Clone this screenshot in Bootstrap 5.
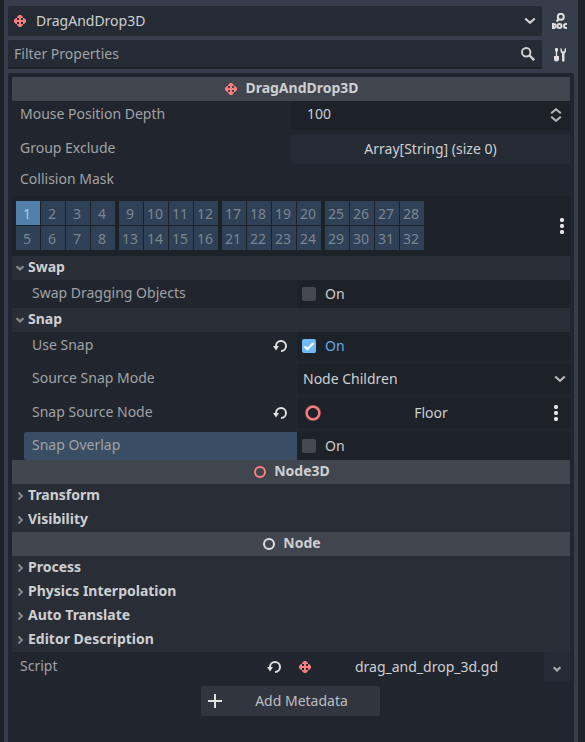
<!DOCTYPE html>
<html lang="en" data-bs-theme="dark">
<head>
<meta charset="utf-8">
<meta name="viewport" content="width=device-width, initial-scale=1">
<title>Inspector</title>
<link href="https://cdn.jsdelivr.net/npm/bootstrap@5.3.0/dist/css/bootstrap.min.css" rel="stylesheet">
<style>
:root{--base:#21262e;--dark:#1d2229;--btn:#252b34;--frame:#363d4a;--sub:#292d35;--cat:#41454d;--txt:#cdcfd2;--dim:#a0a2a5}
body{background:var(--dark);font-family:"Noto Sans",sans-serif;font-size:14px;line-height:20px;color:var(--txt);height:742px;overflow:hidden;padding:0 7px 0 4px}
svg{display:block;flex:none}
.frame{background:var(--frame);height:742px;padding:6px 4px 0}
.pick{background:var(--btn);height:30px;border-radius:2px;padding:0 6px}
.pick span{padding-left:10px}
.filter{background:var(--btn);height:29px;border-bottom:2px solid var(--dark);border-radius:2px 2px 0 0;padding:0 7px 0 6px;color:var(--dim)}
.tool{width:32px;padding-left:4px}
.inspector{background:var(--base);height:669px;margin-top:4px;padding:4px 4px 0;border-radius:2px 2px 0 0}
.cat{background:var(--cat);height:24px;font-weight:700;padding:0 0 2px 2px;border-radius:1px}
.cat svg{margin:2px 8px 0 0}
.fold{background:var(--sub);height:24px;font-weight:700;padding:0 0 2px 4px}
.fold svg{margin:2px 4px 0 0;width:8px;color:#85888d}
.prop{height:28px}
.first{height:29px}
.tall{height:30px}
.name{width:273px;padding:0 10px 2px 8px;margin-left:12px;color:var(--dim)}
.name svg{margin-top:2px}
.name.root{width:279px;margin-left:0}
.first .name{padding-bottom:4px}
.caption{height:32px}
.name.picked{background:#394e64;border-radius:2px 0 0 2px}
.val{background:var(--dark);border-radius:2px;min-width:0}
.val.flat{background:var(--btn)}
.val.none{background:none}
.choice{padding:0 4px 0 6px}
.choice svg{color:#b5b7ba}
.nodepick{padding:0 12px 0 8px}
.nodepick span{padding:0 16px 0 3px}
.more{width:26px;color:#a3a5a9}
.scriptname{padding-right:2px}
.spin{margin:2px 8px 0 0}
.tick{width:14px;height:14px;background:#45484f;border-radius:2px;margin:0 9px 0 5px}
.tick.on{background:#70bafa}
.blue{color:#64abe8}
.salmon{color:#fc7f7f}
.white{color:#e0e0e0}
.mask{background:var(--dark);height:60px;padding:5px 6px 0 4px;border-radius:2px 2px 0 0}
.mask>svg{margin-top:17px}
.bits{display:grid;grid-template-columns:repeat(4,24px);grid-auto-rows:24px;gap:1px;margin-right:4px}
.bits span{background:#2e4156;color:#7c858f;text-align:center;line-height:25px;padding-right:2px}
.bits .set{background:#5180aa;color:#b5c8da}
.meta{width:179px;height:30px;background:#31353d;border-radius:2px;margin-left:189px;padding:0 7px;color:#bbbec2}
.meta span{padding-left:8px}
</style>
<script src="https://cdn.jsdelivr.net/npm/bootstrap@5.3.0/dist/js/bootstrap.bundle.min.js"></script>
</head>
<body>
<svg width="0" height="0" class="position-absolute">
  <symbol id="move" viewBox="0 0 12 12"><path fill="#fc7f7f" d="M5 0h2l2 2v1H7v2h2V3h1l2 2v2l-2 2H9V7H7v2h2v1l-2 2H5l-2-2V9h2V7H3v2H2L0 7V5l2-2h1v2h2V3H3V2z"/></symbol>
  <symbol id="down" viewBox="0 0 12 8"><path fill="none" stroke="currentColor" stroke-width="2.200" d="M1.200 1.500 6 5.800l4.800-4.300"/></symbol>
  <symbol id="chev" viewBox="0 0 8 8"><path fill="none" stroke="currentColor" stroke-width="2.200" d="M.6 2.200 4 5.400l3.400-3.200"/></symbol>
  <symbol id="side" viewBox="0 0 8 8"><path fill="none" stroke="currentColor" stroke-width="2" d="M2.400.6 6 4 2.400 7.400"/></symbol>
  <symbol id="undo" viewBox="0 0 14 14"><path fill="none" stroke="#e0e0e0" stroke-width="2" d="M3 8V7a5 5 0 1 1 5 5"/><path fill="#e0e0e0" d="M0 7h6l-3 4.500z"/></symbol>
  <symbol id="ring" viewBox="0 0 12 12"><circle cx="6" cy="6" r="5" fill="none" stroke="currentColor" stroke-width="2"/></symbol>
  <symbol id="dots" viewBox="0 0 4 16"><path fill="#e0e0e0" d="M1 0h2l1 1v2L3 4H1L0 3V1zM1 6h2l1 1v2l-1 1H1L0 9V7zM1 12h2l1 1v2l-1 1H1l-1-1v-2z"/></symbol>
</svg>

<main class="frame">
  <header class="d-flex mb-1">
    <div class="pick d-flex align-items-center flex-grow-1"><svg width="12" height="12"><use href="#move"/></svg><span class="flex-grow-1">DragAndDrop3D</span><svg width="12" height="8"><use href="#down"/></svg></div>
    <div class="tool d-flex align-items-center justify-content-center">
      <svg width="16" height="16" viewBox="0 0 16 16"><g fill="none" stroke="#e0e0e0"><circle cx="8.800" cy="3.800" r="3" stroke-width="2"/><path stroke-width="2.200" d="M7 6 4.500 8.500"/><path stroke-width="2" d="M1 10v6M1 11h.7a2 2 0 0 1 0 4H1zM15 11h-1a2 2 0 0 0 0 4h1"/><circle cx="7.500" cy="13" r="2" stroke-width="2"/></g></svg>
    </div>
  </header>
  <div class="d-flex">
    <div class="filter d-flex align-items-center flex-grow-1"><span class="flex-grow-1">Filter Properties</span><svg width="14" height="14" viewBox="0 0 14 14"><g fill="none" stroke="#cdcfd2"><circle cx="5.200" cy="5.200" r="4.200" stroke-width="2"/><path stroke-width="2.400" d="m8.200 8.200 5 5"/></g></svg></div>
    <div class="tool d-flex align-items-center justify-content-center">
      <svg width="14" height="16" viewBox="0 0 14 16"><g fill="#e0e0e0"><path d="M2 1.500 3 1h1l1 .5v2L4.200 5v4H6v3.500a2.500 2 0 0 1-5 0V9h1.800V5L2 3.500z"/><path d="M7.500 1v3A3 3 0 0 0 9 6.500V14q1 1.500 2.500 0V6.500A3 3 0 0 0 13 4V1l-1.500 1v2.200H9V2z"/></g></svg>
    </div>
  </div>

  <section class="inspector">
    <div class="cat d-flex align-items-center justify-content-center"><svg width="12" height="12"><use href="#move"/></svg>DragAndDrop3D</div>
    <div class="prop first d-flex mb-1"><div class="name root d-flex align-items-center">Mouse Position Depth</div>
      <div class="val d-flex align-items-center flex-grow-1 ps-3 pb-1"><span class="flex-grow-1">100</span><svg class="spin" width="12" height="14" viewBox="0 0 12 14"><path fill="none" stroke="#b5b7ba" stroke-width="2" d="M1.200 5.200 6 1.200l4.800 4M1.200 8.800l4.800 4 4.800-4"/></svg></div></div>
    <div class="prop tall d-flex"><div class="name root d-flex align-items-center">Group Exclude</div><div class="val flat d-flex align-items-center justify-content-center flex-grow-1">Array[String] (size 0)</div></div>
    <div class="name root caption d-flex align-items-center">Collision Mask</div>
    <div class="mask d-flex align-items-start">
      <div class="bits"><span class="set">1</span><span>2</span><span>3</span><span>4</span><span>5</span><span>6</span><span>7</span><span>8</span></div>
      <div class="bits"><span>9</span><span>10</span><span>11</span><span>12</span><span>13</span><span>14</span><span>15</span><span>16</span></div>
      <div class="bits"><span>17</span><span>18</span><span>19</span><span>20</span><span>21</span><span>22</span><span>23</span><span>24</span></div>
      <div class="bits"><span>25</span><span>26</span><span>27</span><span>28</span><span>29</span><span>30</span><span>31</span><span>32</span></div>
      <svg class="ms-auto" width="4" height="16"><use href="#dots"/></svg>
    </div>

    <div class="fold d-flex align-items-center"><svg height="8"><use href="#chev"/></svg>Swap</div>
    <div class="prop d-flex"><div class="name d-flex align-items-center">Swap Dragging Objects</div><div class="val d-flex align-items-center flex-grow-1"><i class="tick"></i>On</div></div>
    <div class="fold d-flex align-items-center"><svg height="8"><use href="#chev"/></svg>Snap</div>
    <div class="prop d-flex mb-1"><div class="name d-flex align-items-center justify-content-between">Use Snap<svg width="14" height="14"><use href="#undo"/></svg></div><div class="val d-flex align-items-center flex-grow-1 blue"><i class="tick on"><svg width="14" height="14" viewBox="0 0 14 14"><path fill="none" stroke="#fff" stroke-width="2.200" d="m2.500 7.500 3 2.500 6-6"/></svg></i>On</div></div>
    <div class="prop tall d-flex mb-1"><div class="name d-flex align-items-center">Source Snap Mode</div><div class="val choice d-flex align-items-center justify-content-between flex-grow-1">Node Children<svg width="12" height="8"><use href="#down"/></svg></div></div>
    <div class="prop tall d-flex mb-1"><div class="name d-flex align-items-center justify-content-between">Snap Source Node<svg width="14" height="14"><use href="#undo"/></svg></div><div class="val nodepick d-flex align-items-center flex-grow-1"><svg class="salmon" width="16" height="16" viewBox="0 0 16 16"><circle cx="8" cy="8" r="6.500" fill="none" stroke="#8d4f54" stroke-width="3"/><circle cx="8" cy="8" r="6.300" fill="none" stroke="currentColor" stroke-width="2"/></svg><span class="flex-grow-1 text-center">Floor</span><svg width="4" height="16"><use href="#dots"/></svg></div></div>
    <div class="prop d-flex"><div class="name picked d-flex align-items-center">Snap Overlap</div><div class="val d-flex align-items-center flex-grow-1"><i class="tick"></i>On</div></div>

    <div class="cat d-flex align-items-center justify-content-center"><svg class="salmon" width="12" height="12"><use href="#ring"/></svg>Node3D</div>
    <div class="fold d-flex align-items-center"><svg height="8"><use href="#side"/></svg>Transform</div>
    <div class="fold d-flex align-items-center"><svg height="8"><use href="#side"/></svg>Visibility</div>
    <div class="cat d-flex align-items-center justify-content-center"><svg class="white" width="12" height="12"><use href="#ring"/></svg>Node</div>
    <div class="fold d-flex align-items-center"><svg height="8"><use href="#side"/></svg>Process</div>
    <div class="fold d-flex align-items-center"><svg height="8"><use href="#side"/></svg>Physics Interpolation</div>
    <div class="fold d-flex align-items-center"><svg height="8"><use href="#side"/></svg>Auto Translate</div>
    <div class="fold d-flex align-items-center"><svg height="8"><use href="#side"/></svg>Editor Description</div>
    <div class="prop tall d-flex mb-1"><div class="name root d-flex align-items-center justify-content-between">Script<svg width="14" height="14"><use href="#undo"/></svg></div>
      <div class="val none d-flex align-items-center flex-grow-1 ps-2"><svg width="12" height="12"><use href="#move"/></svg><span class="scriptname flex-grow-1 text-center">drag_and_drop_3d.gd</span></div>
      <div class="val flat more d-flex align-items-center justify-content-center"><svg class="mt-1" width="8" height="8"><use href="#chev"/></svg></div></div>
    <div class="meta d-flex align-items-center"><svg width="14" height="14" viewBox="0 0 14 14"><path stroke="#e0e0e0" stroke-width="2" d="M7 0v14M0 7h14"/></svg><span class="flex-grow-1 text-center">Add Metadata</span></div>
  </section>
</main>
</body>
</html>
